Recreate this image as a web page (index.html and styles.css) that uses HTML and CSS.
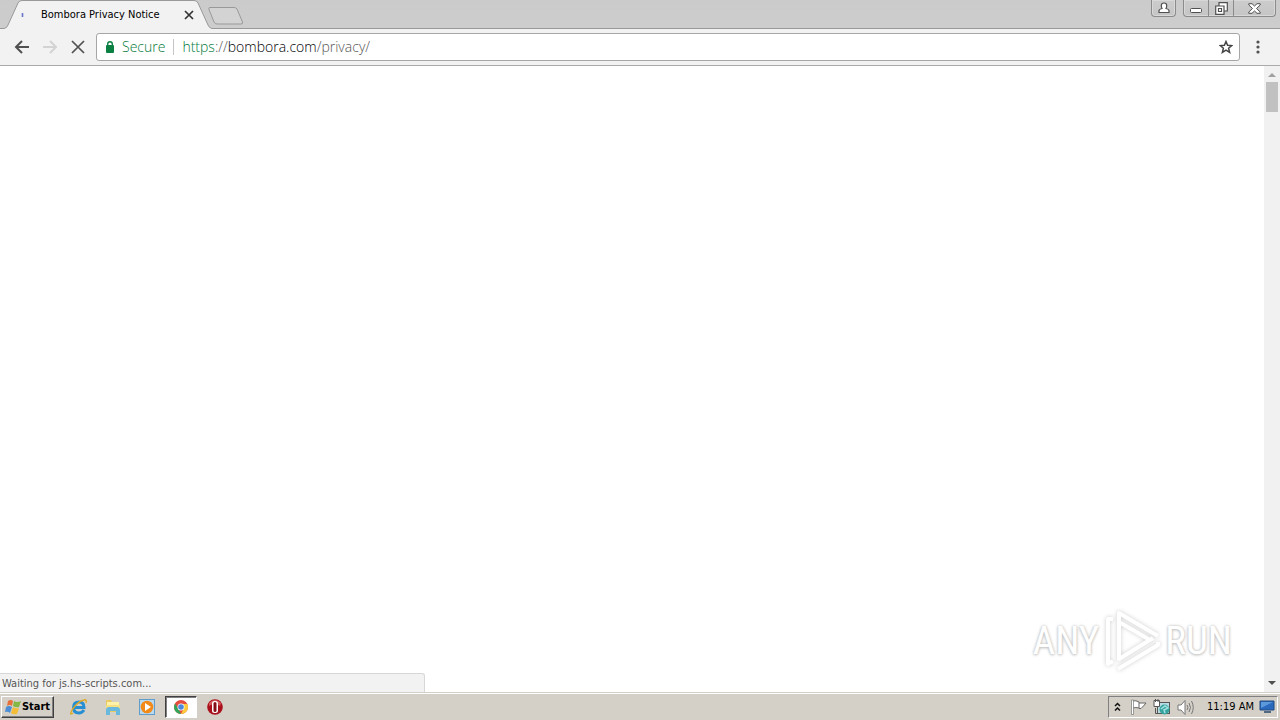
FILE: index.html
```html
<!DOCTYPE html>
<html lang="en">
<head>
<meta charset="utf-8">
<title>Bombora Privacy Notice</title>
<link rel="stylesheet" href="styles.css">
</head>
<body>
<header class="tabstrip">
  <div class="tab">
    <svg class="tab-shape" width="208" height="29" viewBox="0 0 208 29" aria-hidden="true"><path d="M0 28.5 Q3 28 4 25 L14 3 Q15 .5 18 .5 H190 Q193 .5 194 3 L204 25 Q205 28 208 28.500 V29 H0Z" fill="#f2f2f2"/><path d="M0 28.5 Q3 28 4 25 L14 3 Q15 .5 18 .5 H190 Q193 .5 194 3 L204 25 Q205 28 208 28.500" fill="none" stroke="#999"/></svg>
    <svg class="spinner" width="4" height="6" aria-hidden="true"><path d="M2.500 1V5" fill="none" stroke="#6573cd" stroke-width="1.600"/></svg>
    <span class="tab-title">Bombora Privacy Notice</span>
    <button class="tab-close" aria-label="Close tab"><svg width="10" height="10"><path d="M1 1 9 9M9 1 1 9" stroke="#333" stroke-width="1.700"/></svg></button>
  </div>
  <button class="new-tab" aria-label="New tab"><svg width="36" height="18"><path d="M2 .5 H26 Q28 .5 29 2 L34.500 15 Q35 17 33 17 H9 Q7 17 6 15 L.8 2 Q.5 .5 2 .5Z" fill="#d3d3d3" stroke="#999"/></svg></button>
  <div class="window-controls">
    <button class="profile" aria-label="Profile"><svg width="12" height="12"><path d="M1 10.500V8.500Q1.500 7 4 6.500Q3.300 5.300 3.300 3.500Q3.300 1 6 1T8.700 3.500Q8.700 5.300 8 6.500Q10.500 7 11 8.500V10.500Z" fill="#fff" stroke="#505050" stroke-width="1.200"/></svg></button>
    <div class="window-group">
      <button class="minimize" aria-label="Minimize"><svg width="12" height="5"><rect x=".5" y=".5" width="11" height="4" rx="1" fill="#fff" stroke="#505050"/></svg></button>
      <button class="restore" aria-label="Restore"><svg width="13" height="13"><path d="M4 4V.7H12.300V9H9M.7 4H9V12.300H.7Z" fill="#fff" stroke="#505050" stroke-width="1.200"/><path d="M3.500 6.500H6.500V9.500H3.500Z" fill="none" stroke="#505050" stroke-width="1.200"/></svg></button>
      <button class="close" aria-label="Close"><svg width="13" height="11"><path d="M.8.7H4L6.500 3 9 .7H12.200V2L8.500 5.500 12.200 9V10.300H9L6.500 8 4 10.300H.8V9L4.500 5.500.8 2Z" fill="#fff" stroke="#505050"/></svg></button>
    </div>
  </div>
</header>

<nav class="toolbar" aria-label="Navigation">
  <button class="nav-button" aria-label="Back"><svg width="16" height="14"><path d="M15 7H2M8 1 2 7 8 13" fill="none" stroke="#505050" stroke-width="2"/></svg></button>
  <button class="nav-button" aria-label="Forward" disabled><svg width="16" height="14"><path d="M1 7H14M8 1 14 7 8 13" fill="none" stroke="#d3d3d3" stroke-width="2"/></svg></button>
  <button class="nav-button" aria-label="Stop"><svg width="14" height="14"><path d="M1 1 13 13M13 1 1 13" stroke="#505050" stroke-width="1.700"/></svg></button>
  <div class="address">
    <svg width="8" height="12" aria-hidden="true"><rect y="4" width="8" height="8" rx="1" fill="#0b8043"/><path d="M1.700 5V3Q1.700.8 4 .8T6.300 3V5" fill="none" stroke="#0b8043" stroke-width="1.400"/></svg>
    <span class="secure">Secure</span>
    <a class="url" href="#"><span class="scheme">https</span><span class="muted">://</span>bombora.com<span class="muted">/privacy/</span></a>
    <button class="bookmark" aria-label="Bookmark this page"><svg width="14" height="14"><path d="M7 1.500 8.600 5.300 12.800 5.600 9.600 8.300 10.600 12.400 7 10.200 3.400 12.400 4.400 8.300 1.200 5.600 5.400 5.300Z" fill="#fff" stroke="#444" stroke-width="1.500"/></svg></button>
  </div>
  <button class="menu" aria-label="Menu"><svg width="4" height="14"><g fill="#505050"><circle cx="2" cy="2" r="1.600"/><circle cx="2" cy="7" r="1.600"/><circle cx="2" cy="12" r="1.600"/></g></svg></button>
</nav>

<main class="viewport">
  <div class="page"></div>
  <div class="scrollbar" aria-hidden="true">
    <svg width="8" height="4"><path d="M0 4 4 0 8 4Z" fill="#a0a0a0"/></svg>
    <div class="thumb"></div>
    <svg class="scroll-down" width="8" height="4"><path d="M0 0H8L4 4Z" fill="#505050"/></svg>
  </div>
  <div class="watermark">
    <span>ANY</span>
    <svg width="60" height="66" viewBox="0 0 60 66" aria-hidden="true"><g fill="none" stroke="#fff" stroke-width="4" stroke-linejoin="round"><path d="M17 27V5L56 28M17 27V51L51 30M17 14L48 32"/><path d="M11 11H6V56L11 53M16 61 56 37V34"/></g></svg>
    <span>RUN</span>
  </div>
  <div class="status">Waiting for js.hs-scripts.com...</div>
</main>

<footer class="taskbar">
  <button class="start"><svg width="17" height="16" aria-hidden="true"><path d="M3 2Q6 0 8 2L7 7Q5 5 2 7Z" fill="#e8703a"/><path d="M9 2Q12 4 16 2L14 8Q11 9 8 7Z" fill="#83b846"/><path d="M1 8Q4 6 7 8L5 14Q3 12 0 13Z" fill="#4c8ed5"/><path d="M8 8Q11 10 14 9L12 15Q8 16 6 14Z" fill="#f3bd38"/></svg>Start</button>
  <div class="quick-launch">
    <button class="task" aria-label="Internet Explorer"><svg width="18" height="18"><path d="M14 12Q12 15 9 15Q3.500 15 3.500 9.500T9 4Q14 4 14 9.500H5" fill="none" stroke="#268fd4" stroke-width="3"/><path d="M3 15Q-1 18 2 12Q8 3 14 2Q17 1 16 5" fill="none" stroke="#dfa927" stroke-width="1.400"/></svg></button>
    <button class="task" aria-label="Windows Explorer"><svg width="18" height="18"><path d="M2 2H7L8 4H15V14H2Z" fill="#e9ca62"/><path d="M3 4H15V9H3Z" fill="#fff1a6"/><path d="M2 7H16V13H2Z" fill="#f7df83"/><path d="M2 17V12Q2 9 5 9H13Q16 9 16 12V17H12V13H6V17Z" fill="#69b9de"/></svg></button>
    <button class="task" aria-label="Media Player"><svg width="18" height="18"><rect x="1.500" y="1.500" width="15" height="15" fill="#b9d9f0" stroke="#609dca"/><circle cx="9" cy="9" r="6.300" fill="#f18a18"/><path d="M7 5 13 9 7 13Z" fill="#fff"/></svg></button>
    <button class="task active" aria-label="Chrome"><svg width="16" height="16"><circle cx="8" cy="8" r="7" fill="#e54c3e"/><path d="M2 4.500 6 11 8 15A7 7 0 0 1 2 4.500" fill="#31a65a"/><path d="M8 5H14.300A7 7 0 0 1 8 15L11 9Z" fill="#fccb3b"/><circle cx="8" cy="8" r="3.500" fill="#fff"/><circle cx="8" cy="8" r="2.800" fill="#4e86db"/></svg></button>
    <button class="task" aria-label="Opera"><svg width="18" height="18"><circle cx="9" cy="9" r="7.800" fill="#a9101b"/><path d="M3 5Q9-1 15 5L14 8Q9 4 3 8Z" fill="#d65a5b"/><rect x="6" y="3" width="6" height="12" rx="2.500" fill="#fff"/><rect x="7.500" y="4" width="3" height="10" rx="1.500" fill="#861017"/></svg></button>
  </div>
  <div class="tray">
    <button class="tray-icon chevrons" aria-label="Show hidden icons"><svg width="7" height="10"><path d="M1 4 3.500 1.500 6 4M1 8.500 3.500 6 6 8.500" fill="none" stroke="#111" stroke-width="1.500"/></svg></button>
    <button class="tray-icon" aria-label="Action Center"><svg width="18" height="17"><path d="M3.500 2Q7 1 10 3V9Q7 8 3.500 9M10 4H17L14.500 7 12 9.500H10" fill="#fff" stroke="#666"/><path d="M2.500 1V15.500H4.500V1Z" fill="#fff" stroke="#777" stroke-width=".7"/></svg></button>
    <button class="tray-icon" aria-label="Network"><svg width="18" height="17"><rect x="4.500" y="3.500" width="12" height="11" fill="#b8dce4" stroke="#555"/><path d="M2.500 9V14.500H7" fill="none" stroke="#555"/><path d="M1 1.500H6.500V7.500H1Z" fill="#fff" stroke="#555"/><path d="M2.500 0V3M5 0V3" stroke="#555"/><circle cx="11.500" cy="10.500" r="5" fill="#36a39f"/><path d="M8 10 12 7 15 9 11 11 12 14" fill="none" stroke="#a1e0df" stroke-width="1.500"/></svg></button>
    <button class="tray-icon" aria-label="Volume"><svg width="18" height="17"><path d="M1 6H4L8 1.500V15.500L4 11H1Z" fill="#fff" stroke="#777"/><path d="M10 6Q12 8.500 10 11M12 4Q15 8.500 12 13M14.500 2Q18 8.500 14.500 15" fill="none" stroke="#777" stroke-width="1"/></svg></button>
    <time class="clock">11:19 AM</time>
    <button class="tray-icon" aria-label="Show desktop"><svg width="16" height="14"><path d="M1 1H15V10H1Z" fill="#2b69bd" stroke="#214a82"/><path d="M2 2H14L2 8Z" fill="#5c99db"/><path d="M5 12H12" stroke="#536981" stroke-width="2"/></svg></button>
  </div>
</footer>
</body>
</html>
```
FILE: styles.css
```css
* { box-sizing: border-box; }
body {
  margin: 0;
  height: 100vh;
  display: flex;
  flex-direction: column;
  overflow: hidden;
  background: #fff;
  color: #000;
  font: 11px/14px Tahoma, "DejaVu Sans Condensed", sans-serif;
}
button {
  display: flex;
  align-items: center;
  justify-content: center;
  padding: 0;
  border: 0;
  background: none;
  color: inherit;
  font: inherit;
}
svg { display: block; flex-shrink: 0; }
.tabstrip {
  display: flex;
  height: 29px;
  padding: 0 4px;
  background: linear-gradient(#cbcbcb, #cdcdcd);
  border-bottom: 1px solid #999;
}
.tab {
  position: relative;
  display: flex;
  align-items: center;
  width: 208px;
  height: 29px;
  padding: 0 14px 0 16px;
}
.tab-shape { position: absolute; left: 0; top: 0; }
.spinner, .tab-title, .tab-close { position: relative; }
.tab-title { margin-left: 17px; white-space: nowrap; }
.tab-close { margin-left: auto; width: 18px; height: 20px; }
.new-tab { align-self: flex-start; margin: 7px 0 0 -4px; }
.window-controls { display: flex; gap: 7px; margin-left: auto; height: 17px; }
.profile, .window-group {
  border: 1px solid #8b8b8b;
  border-top: 0;
  border-radius: 0 0 4px 4px;
  background: linear-gradient(#ccc, #c5c5c5);
  box-shadow: inset 0 0 0 1px #d8d8d8;
}
.profile { width: 25px; }
.window-group { display: flex; width: 93px; }
.minimize, .restore { width: 25px; border-right: 1px solid #8b8b8b; }
.minimize { padding-top: 4px; }
.close { flex: 1; }
.toolbar {
  display: flex;
  align-items: center;
  height: 37px;
  padding: 0 12px 0 8px;
  background: #f2f2f2;
  border-bottom: 1px solid #aaa;
}
.nav-button { width: 28px; height: 28px; }
.address {
  display: flex;
  flex: 1;
  align-items: center;
  height: 28px;
  margin-left: 4px;
  padding: 0 6px 0 9px;
  background: #fff;
  border: 1px solid #a6a6a6;
  border-radius: 3px;
  font: 300 14px/18px "Open Sans", "Noto Sans", sans-serif;
}
.secure {
  margin: 0 8px;
  padding-right: 8px;
  border-right: 1px solid #c5c5c5;
  line-height: 16px;
  color: #007a38;
}
.url { color: #000; text-decoration: none; white-space: nowrap; }
.scheme { color: #007a38; }
.muted { color: #555; }
.bookmark { margin-left: auto; }
.menu { width: 20px; height: 28px; margin-left: 8px; }
.viewport { position: relative; display: flex; flex: 1; min-height: 0; }
.page { flex: 1; background: #fff; }
.scrollbar {
  display: flex;
  flex-direction: column;
  align-items: center;
  width: 16px;
  padding: 7px 0;
  background: #f1f1f1;
}
.thumb { width: 12px; height: 30px; margin-top: 5px; background: #c1c1c1; }
.scroll-down { margin-top: auto; }
.status {
  position: absolute;
  left: 0;
  bottom: 0;
  width: 425px;
  height: 19px;
  padding: 3px 2px;
  background: #f2f2f2;
  border: 1px solid #d7d7d7;
  border-width: 1px 1px 0 0;
  border-radius: 0 3px 0 0;
  color: #555;
}
.watermark {
  position: absolute;
  right: 48px;
  bottom: 18px;
  display: flex;
  align-items: center;
  gap: 3px;
  color: #fff;
  font: 400 39px/40px "Roboto Condensed", Roboto, sans-serif;
  text-shadow: 0 0 3px #bbb, 0 1px 3px #ccc;
}
.watermark svg { filter: drop-shadow(0 0 2px #ccc); }
.taskbar {
  display: flex;
  align-items: center;
  height: 28px;
  padding: 1px 2px 0 1px;
  background: #d4d0c8;
  border-top: 1px solid #d4d0c8;
  box-shadow: inset 0 1px #fff;
}
.start {
  width: 53px;
  height: 22px;
  border: 1px solid;
  border-color: #fff #404040 #404040 #fff;
  box-shadow: inset -1px -1px #808080;
  font: bold 11px/14px Tahoma, "DejaVu Sans Condensed", sans-serif;
}
.quick-launch { display: flex; gap: 2px; margin-left: 9px; }
.task { width: 32px; height: 22px; }
.active {
  background: #fff;
  border: 1px solid;
  border-color: #404040 #fff #fff #404040;
  box-shadow: inset 1px 1px #808080;
}
.tray {
  display: flex;
  align-items: center;
  height: 22px;
  margin-left: auto;
  padding: 0 1px 0 3px;
  border: 1px solid;
  border-color: #808080 #fff #fff #808080;
}
.tray-icon { width: 24px; height: 20px; }
.chevrons { width: 10px; margin-right: 4px; }
.clock { margin: 0 4px 0 9px; white-space: nowrap; }
.tray-icon:last-child { width: 18px; }
```
